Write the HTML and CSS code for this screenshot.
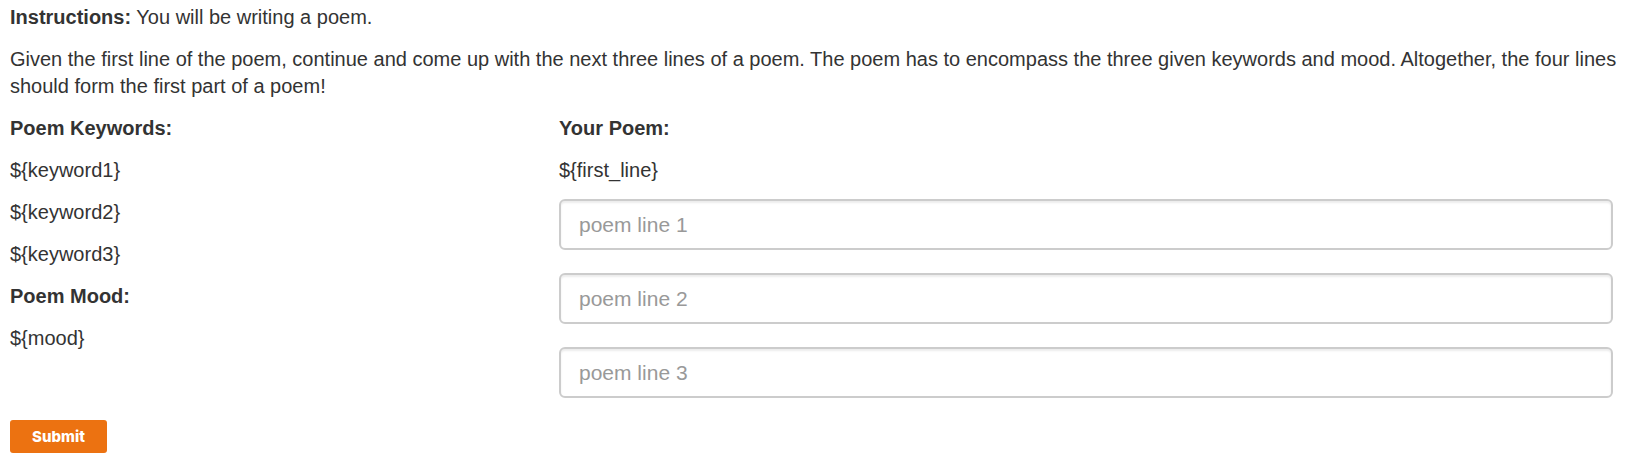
FILE: index.html
```html
<!DOCTYPE html>
<html lang="en">
<head>
<meta charset="utf-8">
<title>Poem writing</title>
<link rel="stylesheet" href="styles.css">
</head>
<body>
<form class="task">
  <p><strong>Instructions:</strong> You will be writing a poem.</p>
  <p>Given the first line of the poem, continue and come up with the next three lines of a poem. The poem has to encompass the three given keywords and mood. Altogether, the four lines should form the first part of a poem!</p>
  <div class="columns">
    <section>
      <p><strong>Poem Keywords:</strong></p>
      <p>${keyword1}</p>
      <p>${keyword2}</p>
      <p>${keyword3}</p>
      <p><strong>Poem Mood:</strong></p>
      <p>${mood}</p>
    </section>
    <section>
      <p><strong>Your Poem:</strong></p>
      <p>${first_line}</p>
      <div class="lines">
        <input class="line" type="text" placeholder="poem line 1" aria-label="Poem line 1">
        <input class="line" type="text" placeholder="poem line 2" aria-label="Poem line 2">
        <input class="line" type="text" placeholder="poem line 3" aria-label="Poem line 3">
      </div>
    </section>
  </div>
  <button class="submit" type="submit">Submit</button>
</form>
</body>
</html>
```

FILE: styles.css
```css
* {
  box-sizing: border-box;
}

body {
  margin: 0;
  background: #fff;
  color: #333;
  font: 20px/27px "Liberation Sans", Arial, sans-serif;
}

.task {
  padding: 4px 0 0 10px;
}

p {
  margin: 0 0 15px;
}

.columns {
  display: grid;
  grid-template-columns: 1fr 2fr;
  gap: 22px;
  padding-right: 12px;
}

.lines {
  display: grid;
  gap: 23px;
}

.line {
  width: 100%;
  height: 51px;
  padding: 8px 18px;
  border: 2px solid #ccc;
  border-radius: 6px;
  background: #fff;
  box-shadow: inset 0 2px 2px rgba(0, 0, 0, 0.08);
  color: #555;
  font: inherit;
  font-size: 21px;
}

.line::placeholder {
  color: #999;
}

.submit {
  margin-top: 22px;
  padding: 0 22px;
  height: 33px;
  border: 0;
  border-radius: 3px;
  background: #ec7211;
  color: #fff;
  font: 800 15px Inter, sans-serif;
}
```
